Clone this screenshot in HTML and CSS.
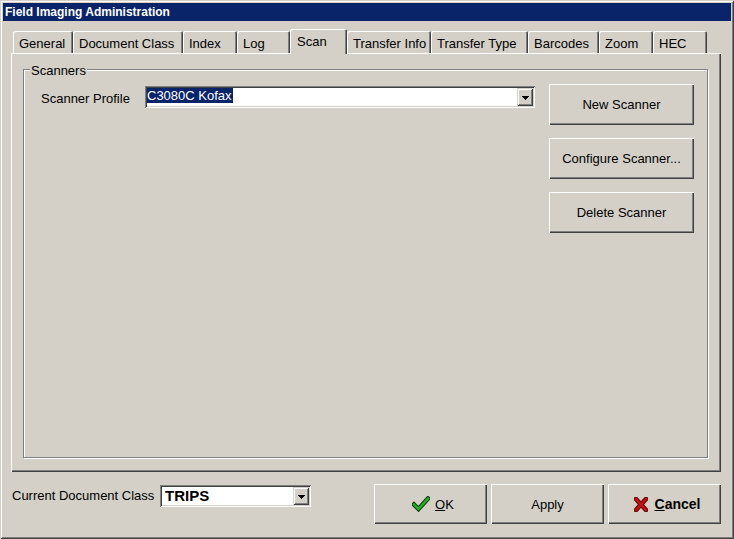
FILE: index.html
```html
<!DOCTYPE html>
<html lang="en">
  <head>
    <meta charset="utf-8">
    <title>Field Imaging Administration</title>
    <link rel="stylesheet" href="styles.css">
  </head>
  <body>
    <div class="window">
      <div class="titlebar">Field Imaging Administration</div>
      <div class="content">
        <div class="tabs">
          <div class="tab t-general">General</div>
          <div class="tab t-docclass">Document Class</div>
          <div class="tab t-index">Index</div>
          <div class="tab t-log">Log</div>
          <div class="tab t-scan selected">Scan</div>
          <div class="tab t-transinfo">Transfer Info</div>
          <div class="tab t-transtype">Transfer Type</div>
          <div class="tab t-barcodes">Barcodes</div>
          <div class="tab t-zoom">Zoom</div>
          <div class="tab t-hec">HEC</div>
        </div>
        <div class="panel">
          <div class="group">
            <span class="legend">Scanners</span>
            <div class="profile-row">
              <span class="profile-label">Scanner Profile</span>
              <div class="combo profile-combo">
                <div class="field"><span class="highlight">C3080C Kofax</span></div>
                <div class="drop"><svg width="7" height="4" viewBox="0 0 7 4" shape-rendering="crispEdges"><polygon points="0,0 7,0 3.5,4" fill="#000"/></svg></div>
              </div>
            </div>
            <div class="actions">
              <div class="btn big">New Scanner</div>
              <div class="btn big">Configure Scanner...</div>
              <div class="btn big">Delete Scanner</div>
            </div>
          </div>
        </div>
        <div class="footer">
          <span class="class-label">Current Document Class</span>
          <div class="combo class-combo">
            <div class="field trips">TRIPS</div>
            <div class="drop"><svg width="7" height="4" viewBox="0 0 7 4" shape-rendering="crispEdges"><polygon points="0,0 7,0 3.5,4" fill="#000"/></svg></div>
          </div>
          <div class="buttons">
            <div class="btn wide with-icon">
              <svg class="ico" width="18" height="16" viewBox="0 0 18 16">
                <polyline points="2,8.5 6.5,13 16,2.5" fill="none" stroke="#0a3d0a" stroke-width="4.5" stroke-linejoin="miter" stroke-linecap="square"/>
                <polyline points="2,8.5 6.5,13 16,2.5" fill="none" stroke="#20b020" stroke-width="2.4" stroke-linejoin="miter" stroke-linecap="square"/>
              </svg>
              <span><u>O</u>K</span>
            </div>
            <div class="btn wide">Apply</div>
            <div class="btn wide with-icon">
              <svg class="ico" width="14" height="15" viewBox="0 0 14 15">
                <path d="M2 2 L12 13 M12 2 L2 13" stroke="#5a0000" stroke-width="4.6" stroke-linecap="square"/>
                <path d="M2 2 L12 13 M12 2 L2 13" stroke="#c41010" stroke-width="2.6" stroke-linecap="square"/>
              </svg>
              <span class="bold"><u>C</u>ancel</span>
            </div>
          </div>
        </div>
      </div>
    </div>
  </body>
</html>
```

FILE: styles.css
```css
body { margin: 0; background: #d4d0c8; font-family: "Liberation Sans", Arial, sans-serif; font-size: 13px; color: #000; }

.window {
  width: 734px; height: 539px; box-sizing: border-box; padding: 3px;
  background: #d4d0c8; display: flex; flex-direction: column;
  box-shadow: inset 1px 1px #d4d0c8, inset -1px -1px #404040, inset 2px 2px #fff, inset -2px -2px #808080;
}
.titlebar {
  height: 18px; line-height: 18px; padding-left: 2px; background: #0a246a;
  color: #fff; font-weight: bold; font-size: 12px;
}
.content { flex: 1; display: flex; flex-direction: column; padding: 8px 10px 0 8px; }

/* tabs */
.tabs { display: flex; align-items: flex-end; height: 24px; padding-left: 2px; }
.tab {
  height: 22px; box-sizing: border-box; padding: 5px 0 0 6px; line-height: 15px;
  border-radius: 2px 2px 0 0;
  box-shadow: inset 1px 1px #fff, inset -1px 0 #404040, inset -2px 0 #808080;
  white-space: nowrap; overflow: hidden;
}
.tab.selected { height: 25px; margin-bottom: -1px; position: relative; background: #d4d0c8; padding-left: 7px; }
.t-general { width: 60px; }
.t-docclass { width: 110px; }
.t-index { width: 54px; }
.t-log { width: 53px; }
.t-scan { width: 57px; }
.t-transinfo { width: 84px; }
.t-transtype { width: 97px; }
.t-barcodes { width: 71px; }
.t-zoom { width: 54px; }
.t-hec { width: 54px; }

.panel {
  height: 419px; box-sizing: border-box; padding: 16px 13px 14px 12px; display: flex;
  box-shadow: inset 1px 1px #fff, inset -1px -1px #404040, inset -2px -2px #808080;
}

/* group box */
.group {
  flex: 1; position: relative; border: 1px solid #808080;
  box-shadow: inset 1px 1px #fff, 1px 1px #fff;
  display: flex; justify-content: space-between; align-items: flex-start;
  padding: 14px 13px 0 17px;
}
.legend { position: absolute; top: -7px; left: 6px; padding: 0 1px; line-height: 15px; background: #d4d0c8; }
.profile-row { display: flex; margin-top: 2px; }
.profile-label { width: 104px; margin-top: 5px; line-height: 15px; }

/* combo boxes */
.combo {
  height: 22px; box-sizing: border-box; padding: 2px; background: #fff; display: flex;
  box-shadow: inset 1px 1px #808080, inset -1px -1px #fff, inset 2px 2px #404040, inset -2px -2px #d4d0c8;
}
.combo .field { flex: 1; overflow: hidden; white-space: nowrap; }
.profile-combo { width: 390px; }
.highlight { display: inline-block; line-height: 15px; background: #0a246a; color: #fff; padding: 0 1px 0 0; }
.drop {
  width: 16px; background: #d4d0c8; display: flex; align-items: center; justify-content: center;
  box-shadow: inset 1px 1px #d4d0c8, inset -1px -1px #404040, inset 2px 2px #fff, inset -2px -2px #808080;
}
.drop svg { display: block; margin-top: 1px; }

/* buttons */
.actions { display: flex; flex-direction: column; gap: 13px; }
.btn {
  box-sizing: border-box; display: flex; align-items: center; justify-content: center;
  background: #d4d0c8; white-space: nowrap;
  box-shadow: inset 1px 1px #fff, inset -1px -1px #404040, inset -2px -2px #808080;
}
.btn.big { width: 145px; height: 41px; }
.btn.wide { width: 113px; height: 40px; }
.btn.with-icon { padding-left: 5px; }
.btn .ico { display: block; margin-right: 5px; }
.btn .bold { font-weight: bold; font-size: 14px; margin-left: 2px; }

/* footer */
.footer { display: flex; align-items: flex-start; margin-top: 12px; height: 40px; }
.class-label { width: 148px; padding-left: 1px; margin-top: 4px; line-height: 15px; }
.class-combo { width: 151px; margin-top: 1px; }
.trips { font-weight: bold; font-size: 15px; line-height: 18px; padding-left: 3px; }
.buttons { margin-left: auto; display: flex; gap: 4px; }
```
